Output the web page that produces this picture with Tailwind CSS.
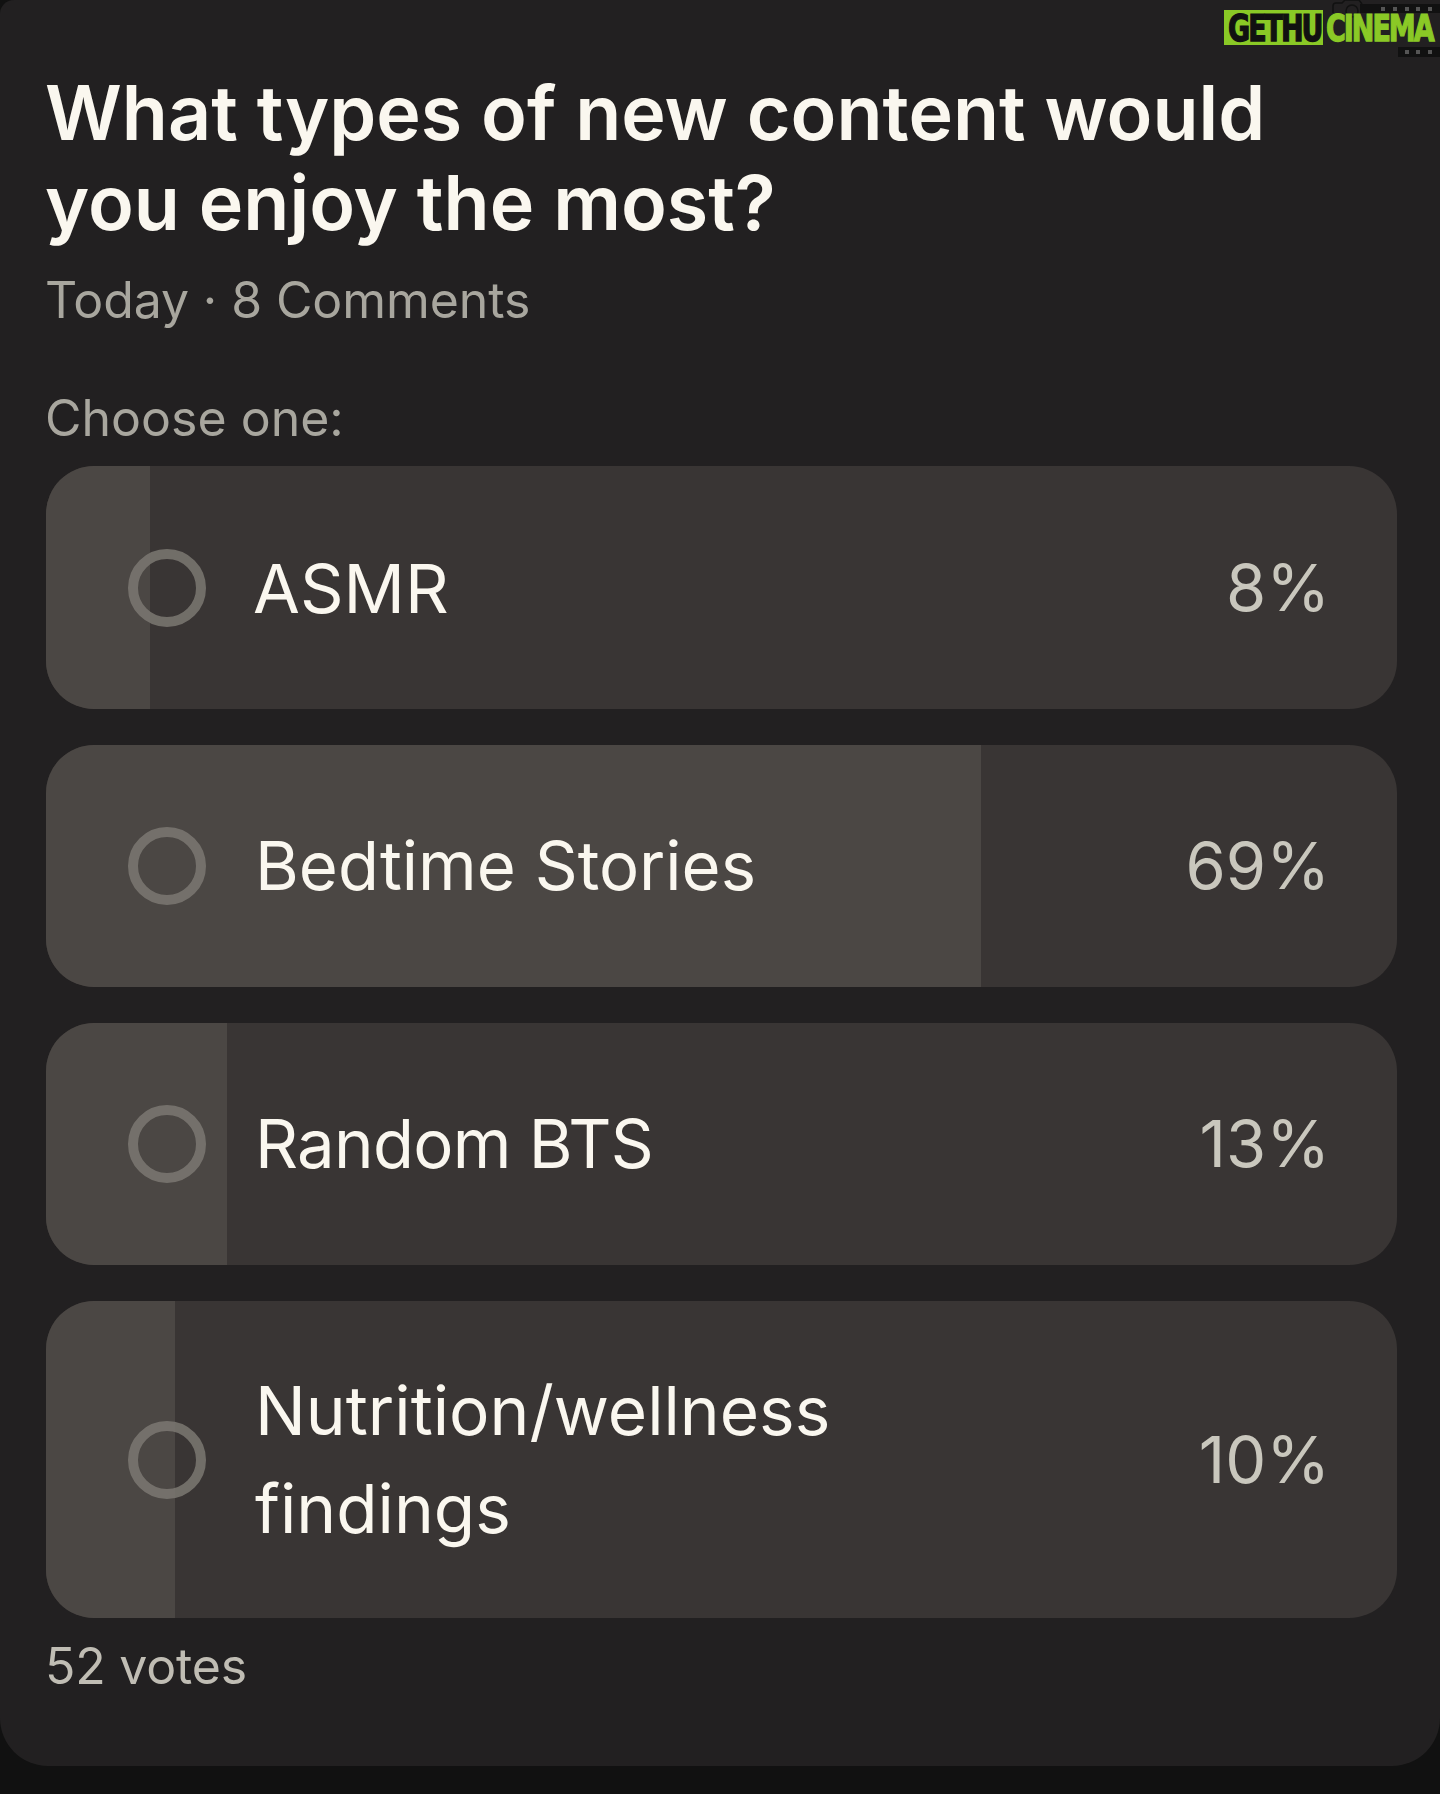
<!doctype html>
<html lang="en">
	<head>
		<meta charset="UTF-8" />
		<title>Poll</title>
		<script src="https://cdn.jsdelivr.net/npm/@tailwindcss/browser@4"></script>
	</head>
	<body class="bg-[#111111] h-[1794px] overflow-hidden font-['Inter',sans-serif]">
		<div class="relative h-[1766px] bg-[#222021] rounded-b-[48px] rounded-tl-[14px] pl-[46px] pr-[43px] pt-[68px]">
			<!-- Watermark -->
			<div class="absolute top-0 right-0 w-[262px] h-[60px]">
				<svg class="absolute inset-0" width="262" height="60" viewBox="0 0 262 60">
					<path d="M155 13V6q0-3 3-3h6l3-3h14l3 4" fill="none" stroke="#111" stroke-width="1.5" />
					<circle cx="174" cy="11" r="6" fill="none" stroke="#111" stroke-width="1.5" />
					<rect x="182" y="4" width="80" height="9" fill="#111" />
					<rect x="220" y="47" width="42" height="10" fill="#111" />
					<g fill="#555">
						<rect x="203" y="7" width="4" height="4" /><rect x="215" y="7" width="4" height="4" /><rect x="227" y="7" width="4" height="4" /><rect x="238" y="7" width="4" height="4" /><rect x="250" y="7" width="4" height="4" />
						<rect x="227" y="50" width="4" height="4" /><rect x="238" y="50" width="4" height="4" /><rect x="250" y="50" width="4" height="4" />
					</g>
				</svg>
				<div class="absolute left-[46px] top-[10px] flex items-stretch h-[35px] font-['DejaVu_Sans_Condensed','DejaVu_Sans',sans-serif] font-bold text-[30px] leading-[35px] tracking-[-2px]">
					<div class="bg-[#8ac926] w-[99px] pl-[4px]"><span class="inline-block scale-y-[1.25] text-[#111] [-webkit-text-stroke:1px_#111]">GETHU</span></div>
					<div class="pl-[3px]"><span class="inline-block scale-y-[1.25] text-[#8ac926] [-webkit-text-stroke:1px_#8ac926]">CINEMA</span></div>
				</div>
			</div>

			<h1 class="-ml-px text-[75.3px] leading-[90px] font-semibold text-[#faf7ef]">What types of new content would<br />you enjoy the most?</h1>
			<p class="-ml-px mt-[22px] text-[50px] leading-[60px] tracking-[-0.1px] text-[#a8a69e]">Today · 8 Comments</p>
			<p class="-ml-px mt-[58px] text-[50px] leading-[60px] text-[#a8a69e]">Choose one:</p>

			<div class="mt-[18px] flex flex-col gap-[36px]">
				<div class="relative flex items-center h-[243px] rounded-[48px] bg-[#393534] overflow-hidden">
					<div class="absolute inset-y-0 left-0 w-[104px] bg-[#4b4744]"></div>
					<div class="relative ml-[82px] w-[78px] h-[78px] shrink-0 rounded-full border-[10px] border-[#7b7872]/85"></div>
					<div class="relative ml-[47px] flex-1 text-[68px] leading-[98px] text-[#faf7ef]">ASMR</div>
					<div class="relative mr-[67px] text-[65px] text-[#c9c7bd]">8%</div>
				</div>
				<div class="relative flex items-center h-[242px] rounded-[48px] bg-[#393534] overflow-hidden">
					<div class="absolute inset-y-0 left-0 w-[935px] bg-[#4b4744]"></div>
					<div class="relative ml-[82px] w-[78px] h-[78px] shrink-0 rounded-full border-[10px] border-[#7b7872]/85"></div>
					<div class="relative ml-[49px] flex-1 text-[67px] leading-[98px] text-[#faf7ef]">Bedtime Stories</div>
					<div class="relative mr-[67px] text-[65px] text-[#c9c7bd]">69%</div>
				</div>
				<div class="relative flex items-center h-[242px] rounded-[48px] bg-[#393534] overflow-hidden">
					<div class="absolute inset-y-0 left-0 w-[181px] bg-[#4b4744]"></div>
					<div class="relative ml-[82px] w-[78px] h-[78px] shrink-0 rounded-full border-[10px] border-[#7b7872]/85"></div>
					<div class="relative ml-[49px] flex-1 text-[67px] leading-[98px] tracking-[-0.7px] text-[#faf7ef]">Random BTS</div>
					<div class="relative mr-[67px] text-[65px] text-[#c9c7bd]">13%</div>
				</div>
				<div class="relative flex items-center h-[317px] rounded-[48px] bg-[#393534] overflow-hidden">
					<div class="absolute inset-y-0 left-0 w-[129px] bg-[#4b4744]"></div>
					<div class="relative ml-[82px] w-[78px] h-[78px] shrink-0 rounded-full border-[10px] border-[#7b7872]/85"></div>
					<div class="relative ml-[49px] flex-1 text-[67.5px] leading-[98px] text-[#faf7ef]">Nutrition/wellness<br />findings</div>
					<div class="relative mr-[67px] text-[65px] text-[#c9c7bd]">10%</div>
				</div>
			</div>

			<p class="-ml-px mt-[18px] text-[50px] leading-[60px] tracking-[-0.2px] text-[#c0bdb4]">52 votes</p>
		</div>
	</body>
</html>
